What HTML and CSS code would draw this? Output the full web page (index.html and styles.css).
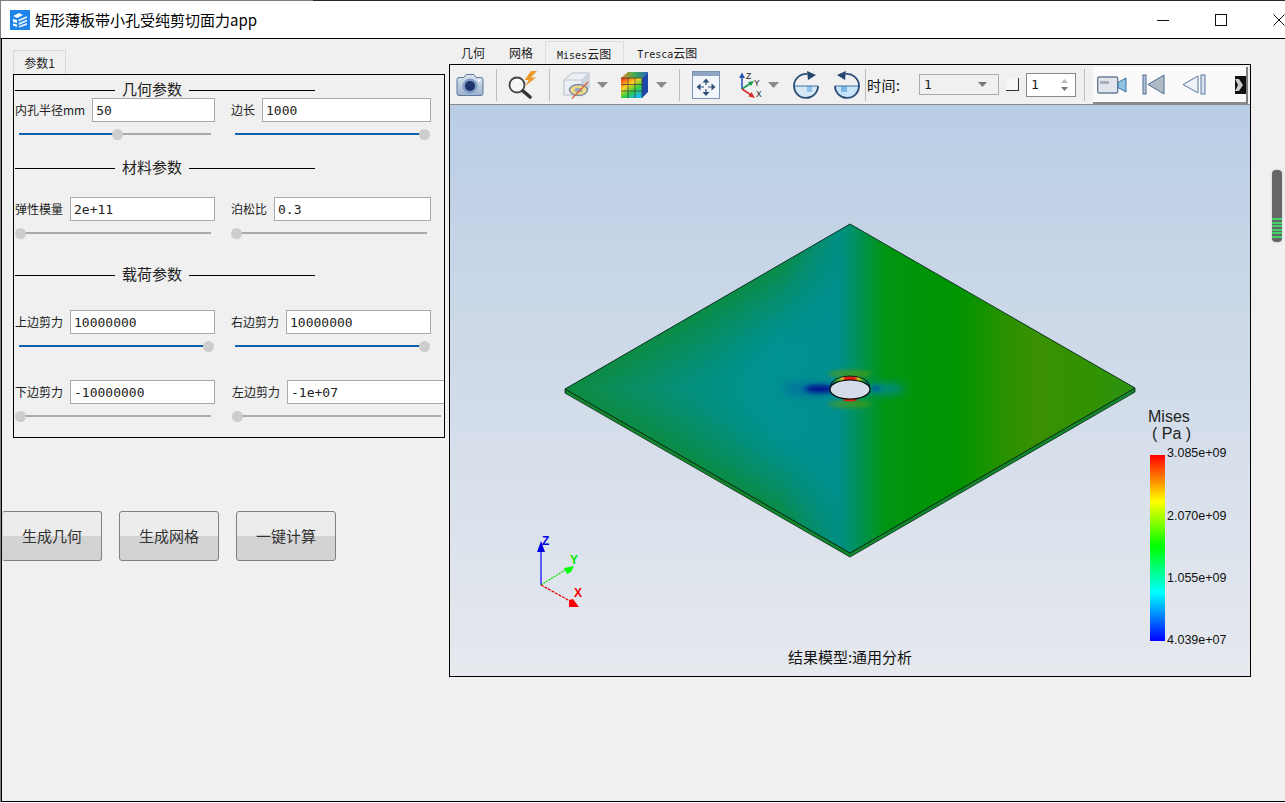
FILE: index.html
```html
<!DOCTYPE html>
<html lang="zh">
<head>
<meta charset="utf-8">
<title>矩形薄板带小孔受纯剪切面力app</title>
<link rel="stylesheet" href="styles.css">
</head>
<body>
<div class="window">
  <header class="titlebar">
    <svg class="app-icon" width="20" height="20" viewBox="0 0 20 20">
      <rect width="20" height="20" fill="#1c84ea"/>
      <path d="M3 6 L9 3 L13 5 L7 8 Z M3 9 L7 10 L7 13 L3 12 Z M3 13.5 L7 14.5 L7 17 L3 15.5 Z" fill="#fff"/>
      <path d="M8.5 9.5 L17 6 L17 8 L8.5 11.5 Z M8.5 13 L17 9.5 L17 11.5 L8.5 15 Z M8.5 16 L17 13 L17 15 L9.5 17.5 Z" fill="#dcecfb"/>
    </svg>
    <span class="app-title">矩形薄板带小孔受纯剪切面力app</span>
    <div class="win-controls">
      <span class="win-btn"><svg width="14" height="14" viewBox="0 0 14 14"><path d="M1 7.5H13" stroke="#111" fill="none"/></svg></span>
      <span class="win-btn"><svg width="14" height="14" viewBox="0 0 14 14"><rect x="1.5" y="1.5" width="11" height="11" stroke="#111" fill="none"/></svg></span>
      <span class="win-btn"><svg width="14" height="14" viewBox="0 0 14 14"><path d="M1.5 1.5L12.5 12.5M12.5 1.5L1.5 12.5" stroke="#111" fill="none"/></svg></span>
    </div>
  </header>

  <main class="main">
    <section class="left">
      <div class="param-tab">参数1</div>
      <div class="panel">
        <div class="sec sec-1"><i class="sec-line sec-line-a"></i><span>几何参数</span><i class="sec-line sec-line-b"></i></div>
        <div class="row row-1">
          <div class="col"><label>内孔半径mm</label><div class="input">50</div></div>
          <div class="col"><label>边长</label><div class="input">1000</div></div>
        </div>
        <div class="sliders">
          <div class="slider"><b class="fill" style="width:98px"></b><u class="knob" style="left:98px"></u></div>
          <div class="slider"><b class="fill" style="width:189px"></b><u class="knob" style="left:189px"></u></div>
        </div>

        <div class="sec sec-2"><i class="sec-line sec-line-a"></i><span>材料参数</span><i class="sec-line sec-line-b"></i></div>
        <div class="row row-2">
          <div class="col"><label>弹性模量</label><div class="input">2e+11</div></div>
          <div class="col"><label>泊松比</label><div class="input">0.3</div></div>
        </div>
        <div class="sliders">
          <div class="slider"><u class="knob" style="left:1px"></u></div>
          <div class="slider"><u class="knob" style="left:1px"></u></div>
        </div>

        <div class="sec sec-3"><i class="sec-line sec-line-a"></i><span>载荷参数</span><i class="sec-line sec-line-b"></i></div>
        <div class="row row-3">
          <div class="col"><label>上边剪力</label><div class="input">10000000</div></div>
          <div class="col"><label>右边剪力</label><div class="input">10000000</div></div>
        </div>
        <div class="sliders">
          <div class="slider"><b class="fill" style="width:189px"></b><u class="knob" style="left:189px"></u></div>
          <div class="slider"><b class="fill" style="width:189px"></b><u class="knob" style="left:189px"></u></div>
        </div>

        <div class="row row-4">
          <div class="col"><label>下边剪力</label><div class="input">-10000000</div></div>
          <div class="col col-wide"><label>左边剪力</label><div class="input input-cut">-1e+07</div></div>
        </div>
        <div class="sliders">
          <div class="slider"><u class="knob" style="left:1px"></u></div>
          <div class="slider slider-wide"><u class="knob" style="left:0"></u></div>
        </div>
      </div>

      <div class="actions">
        <button class="action">生成几何</button>
        <button class="action">生成网格</button>
        <button class="action">一键计算</button>
      </div>
    </section>

    <section class="right">
      <nav class="view-tabs">
        <span class="view-tab">几何</span>
        <span class="view-tab">网格</span>
        <span class="view-tab view-tab-on"><em>Mises</em>云图</span>
        <span class="view-tab"><em>Tresca</em>云图</span>
      </nav>
      <div class="frame">
        <div class="toolbar">
          <svg class="ti ml6" width="28" height="24" viewBox="0 0 28 24">
            <defs><linearGradient id="cb" x1="0" y1="0" x2="0" y2="1"><stop offset="0" stop-color="#dce6f0"/><stop offset="1" stop-color="#9db3cc"/></linearGradient></defs>
            <path d="M1 6.5 Q1 4.5 3 4.5 H8 L10 1.5 H18 L20 4.5 H25 Q27 4.5 27 6.5 V20.5 Q27 22.5 25 22.5 H3 Q1 22.5 1 20.5 Z" fill="url(#cb)" stroke="#5c7aa0"/>
            <circle cx="14" cy="13" r="7.5" fill="#7d9cc4"/><circle cx="14" cy="13" r="5" fill="#1c3268"/>
            <rect x="22" y="6.5" width="2.5" height="2" fill="#fff"/>
          </svg>
          <i class="sep ml12"></i>
          <svg class="ti ml11" width="30" height="28" viewBox="0 0 30 28">
            <circle cx="9" cy="14" r="7.500" fill="#f4f6f8" stroke="#444" stroke-width="1.800"/>
            <path d="M15 20 L22 26" stroke="#333" stroke-width="3.500" stroke-linecap="round"/>
            <path d="M23 0 L16.500 9 H20.500 L17.500 15 L28 6.500 H23 L29 0 Z" fill="#ee9a2a"/>
          </svg>
          <i class="sep ml11"></i>
          <svg class="ti ml12" width="28" height="28" viewBox="0 0 28 28">
            <path d="M2 9 L10 2 H27 V17 L20 24 H2 Z" fill="#eceff3" stroke="#b5bec9"/>
            <path d="M20 9 L27 2 V17 L20 24 Z" fill="#cdd5de"/>
            <path d="M2 9 H20 V24 M20 9 L27 2" fill="none" stroke="#c0c8d2"/>
            <ellipse cx="16.500" cy="19" rx="9" ry="5.500" fill="#ecd98a" stroke="#7d8ea8" stroke-width="1.400"/>
            <ellipse cx="16.500" cy="19" rx="4" ry="2.200" fill="#9aa8b8"/>
            <path d="M10 27.500 L26 11" stroke="#d9603a" stroke-width="1.300"/>
          </svg>
          <svg class="ti ml7" width="11" height="6" viewBox="0 0 11 6"><path d="M0 0H11L5.500 6Z" fill="#8a8a8a"/></svg>
          <svg class="ti ml12" width="30" height="28" viewBox="0 0 30 28">
            <defs>
              <linearGradient id="cf" x1="0" y1="0" x2=".7" y2="1"><stop offset="0" stop-color="#f02818"/><stop offset=".4" stop-color="#ffd020"/><stop offset=".7" stop-color="#30d040"/><stop offset="1" stop-color="#18b8e8"/></linearGradient>
              <linearGradient id="ct" x1="0" y1="0" x2="1" y2="0"><stop offset="0" stop-color="#f08020"/><stop offset=".5" stop-color="#40b050"/><stop offset="1" stop-color="#2060c0"/></linearGradient>
            </defs>
            <path d="M1 7 L8 1 H28 L22 7 Z" fill="url(#ct)"/>
            <path d="M22 7 L28 1 V21 L22 27 Z" fill="#1c48a8"/>
            <rect x="1" y="7" width="21" height="20" fill="url(#cf)"/>
            <path d="M8 7 V27 M15 7 V27 M1 13.500 H22 M1 20 H22 M1 7 H22 M22 7 V27" stroke="#3a3a3a" stroke-width=".7" fill="none"/>
          </svg>
          <svg class="ti ml6" width="11" height="6" viewBox="0 0 11 6"><path d="M0 0H11L5.500 6Z" fill="#8a8a8a"/></svg>
          <i class="sep ml12"></i>
          <svg class="ti ml12" width="28" height="28" viewBox="0 0 28 28">
            <rect x=".5" y=".5" width="27" height="27" fill="#f2f5f9" stroke="#7c93b4"/>
            <rect x="1" y="1" width="26" height="4" fill="#8ea4c2"/>
            <path d="M14 7.500 L10.500 11.500 H17.500 Z M14 25 L10.500 21 H17.500 Z M4.500 16 L8.500 12.500 V19.500 Z M23.500 16 L19.500 12.500 V19.500 Z" fill="#2f4f78"/>
            <path d="M14 11 V14 M14 18 V21.500 M8 16 H12 M16 16 H20" stroke="#2f4f78" stroke-width="1.200"/>
          </svg>
          <svg class="ti ml17" width="28" height="28" viewBox="0 0 28 28">
            <path d="M5 18 V5" stroke="#2a58b8" stroke-width="1.600"/><path d="M5 1.500 L2 7 H8 Z" fill="#2a58b8"/>
            <path d="M5 18 L14 12" stroke="#1a9a50" stroke-width="1.600"/><path d="M17 10 L11 11 L14 15 Z" fill="#1a9a50"/>
            <path d="M5 18 L14 24" stroke="#d83030" stroke-width="1.600"/><path d="M18 27 L11.500 25.500 L14.500 21 Z" fill="#d83030"/>
            <text class="ax-mini" x="9" y="8">Z</text><text class="ax-mini" x="17" y="15">Y</text><text class="ax-mini" x="19" y="26">X</text>
          </svg>
          <svg class="ti ml3" width="11" height="6" viewBox="0 0 11 6"><path d="M0 0H11L5.500 6Z" fill="#8a8a8a"/></svg>
          <svg class="ti ml14" width="26" height="28" viewBox="0 0 26 28">
            <path d="M1 15 H25 A12 12 0 0 1 1 15 Z" fill="#d4e8f6"/>
            <rect x="14" y="15" width="5" height="6" fill="#8fc4ea"/>
            <path d="M1 15 H25" stroke="#3c6ea8" fill="none"/>
            <path d="M25 15 A12 12 0 1 1 14 3" fill="none" stroke="#2c4e78" stroke-width="1.800"/>
            <path d="M14 0 L23 4 L15 9 Z" fill="#23456e"/>
          </svg>
          <svg class="ti ml15" width="26" height="28" viewBox="0 0 26 28">
            <path d="M1 15 H25 A12 12 0 0 1 1 15 Z" fill="#c8e4f8"/>
            <rect x="7" y="15" width="6" height="6" fill="#7db8e6"/>
            <path d="M1 15 H25" stroke="#3c6ea8" fill="none"/>
            <path d="M1 15 A12 12 0 1 0 12 3" fill="none" stroke="#2c4e78" stroke-width="1.800"/>
            <path d="M12 0 L3 4 L11 9 Z" fill="#23456e"/>
          </svg>
          <i class="sep ml5"></i>
          <span class="time-label">时间:</span>
          <div class="combo"><span>1</span><svg width="9" height="5" viewBox="0 0 9 5"><path d="M0 0H9L4.500 5Z" fill="#777"/></svg></div>
          <i class="corner"></i>
          <div class="spin"><span>1</span>
            <div class="spin-arrows"><svg width="7" height="4" viewBox="0 0 7 4"><path d="M3.500 0L7 4H0Z" fill="#bbb"/></svg><svg width="7" height="4" viewBox="0 0 7 4"><path d="M0 0H7L3.500 4Z" fill="#777"/></svg></div>
          </div>
          <i class="sep ml8"></i>
          <div class="tool-light">
            <svg class="ti" width="30" height="20" viewBox="0 0 30 20">
              <rect x=".7" y="2" width="20" height="16" rx="1.500" fill="#e2e6ec" stroke="#6a7d98" stroke-width="1.400"/>
              <rect x="3" y="6" width="9" height="3" fill="#a4b0c0"/>
              <path d="M21 7.500 L29 3 V17 L21 12.500 Z" fill="#8ec4e2" stroke="#3a6f9c"/>
            </svg>
            <svg class="ti ml15" width="23" height="21" viewBox="0 0 23 21">
              <rect x="1" y="1" width="3" height="19" fill="#b6c4d6" stroke="#4e6c96"/>
              <path d="M22 1 L6 10.500 L22 20 Z" fill="#b0b9c4" stroke="#4e6c96"/>
            </svg>
            <svg class="ti ml17" width="24" height="21" viewBox="0 0 24 21">
              <path d="M16 2 L1 10.500 L16 19 Z" fill="#eef1f5" stroke="#587aa4"/>
              <rect x="19" y="1" width="4" height="19" fill="#dbe3ec" stroke="#587aa4"/>
            </svg>
            <svg class="ti ml29" width="11" height="18" viewBox="0 0 11 18">
              <rect width="11" height="18" fill="#111"/>
              <path d="M0 3 H4 L8 9 L4 15 H0 L3 9 Z" fill="#ccc"/>
            </svg>
          </div>
        </div>
        <div class="viewport">
          <svg class="scene" width="800" height="571" viewBox="450 105 800 571">
            <defs>
              <linearGradient id="base" gradientUnits="userSpaceOnUse" x1="565" y1="0" x2="1135" y2="0">
                <stop offset="0" stop-color="#14906a"/>
                <stop offset=".24" stop-color="#03917f"/>
                <stop offset=".36" stop-color="#009292"/>
                <stop offset=".48" stop-color="#008f8e"/>
                <stop offset=".56" stop-color="#009512"/>
                <stop offset=".69" stop-color="#009400"/>
                <stop offset=".77" stop-color="#289200"/>
                <stop offset=".83" stop-color="#3a9000"/>
                <stop offset=".92" stop-color="#329200"/>
                <stop offset="1" stop-color="#2a9414"/>
              </linearGradient>
              <linearGradient id="edgeTop" gradientUnits="userSpaceOnUse" x1="707" y1="306" x2="745" y2="372">
                <stop offset="0" stop-color="#0c8a38" stop-opacity=".85"/>
                <stop offset=".5" stop-color="#0a8c52" stop-opacity=".4"/>
                <stop offset="1" stop-color="#009090" stop-opacity="0"/>
              </linearGradient>
              <linearGradient id="edgeBot" gradientUnits="userSpaceOnUse" x1="707" y1="471" x2="745" y2="405">
                <stop offset="0" stop-color="#0c8a38" stop-opacity=".85"/>
                <stop offset=".5" stop-color="#0a8c52" stop-opacity=".4"/>
                <stop offset="1" stop-color="#009090" stop-opacity="0"/>
              </linearGradient>
              <linearGradient id="fadeX" gradientUnits="userSpaceOnUse" x1="780" y1="0" x2="850" y2="0">
                <stop offset="0" stop-color="#fff"/>
                <stop offset="1" stop-color="#000"/>
              </linearGradient>
              <mask id="leftFade" maskUnits="userSpaceOnUse" x="560" y="220" width="300" height="340">
                <rect x="560" y="220" width="300" height="340" fill="url(#fadeX)"/>
              </mask>
              <linearGradient id="wall" x1="0" y1="0" x2="1" y2="0">
                <stop offset="0" stop-color="#004c9a"/>
                <stop offset=".15" stop-color="#109a30"/>
                <stop offset=".3" stop-color="#c8c820"/>
                <stop offset=".38" stop-color="#e02010"/>
                <stop offset=".62" stop-color="#e02010"/>
                <stop offset=".72" stop-color="#c8c820"/>
                <stop offset=".85" stop-color="#109a30"/>
                <stop offset="1" stop-color="#004c9a"/>
              </linearGradient>
              <linearGradient id="legend" x1="0" y1="0" x2="0" y2="1">
                <stop offset="0" stop-color="#ff0000"/>
                <stop offset=".25" stop-color="#ffff00"/>
                <stop offset=".49" stop-color="#00ff00"/>
                <stop offset=".74" stop-color="#00ffff"/>
                <stop offset="1" stop-color="#0000ff"/>
              </linearGradient>
              <filter id="b2" x="-50%" y="-100%" width="200%" height="300%"><feGaussianBlur stdDeviation="2"/></filter>
              <filter id="b5" x="-50%" y="-100%" width="200%" height="300%"><feGaussianBlur stdDeviation="5"/></filter>
              <clipPath id="plate"><path d="M565 389 L850 224 L1135 388 L850 553 Z"/></clipPath>
            </defs>

            <path d="M565 389 L850 553 L1135 388 V392 L850 557 L565 393 Z" fill="#12882a" stroke="#06281a" stroke-width=".8"/>
            <path d="M565 389 L850 224 L1135 388 L850 553 Z" fill="url(#base)"/>
            <g clip-path="url(#plate)">
              <g mask="url(#leftFade)">
                <path d="M565 389 L850 224 V389 Z" fill="url(#edgeTop)"/>
                <path d="M565 389 L850 553 V389 Z" fill="url(#edgeBot)"/>
              </g>
              <ellipse cx="850" cy="374" rx="22" ry="4" fill="#60a000" opacity=".6" filter="url(#b2)"/>
              <ellipse cx="850" cy="404" rx="22" ry="4" fill="#60a000" opacity=".55" filter="url(#b2)"/>
              <ellipse cx="812" cy="389" rx="30" ry="6" fill="#005ca8" opacity=".65" filter="url(#b5)"/>
              <ellipse cx="820" cy="389" rx="15" ry="3.500" fill="#00108e" filter="url(#b2)"/>
              <ellipse cx="885" cy="389" rx="20" ry="5" fill="#0088a8" opacity=".9" filter="url(#b5)"/>
              <ellipse cx="876" cy="388.500" rx="5" ry="2" fill="#0050b0" filter="url(#b2)"/>
            </g>
            <path d="M565 389 L850 224 L1135 388 L850 553 Z" fill="none" stroke="#06281a" stroke-width=".9"/>
            <ellipse cx="850" cy="400" rx="7" ry="1.500" fill="#e02010"/>
            <ellipse cx="850" cy="386" rx="19.500" ry="10" fill="url(#wall)" stroke="#051a20" stroke-width=".9"/>
            <ellipse cx="850" cy="389.500" rx="20" ry="9.500" fill="#d3dce8" stroke="#000" stroke-width="1.100"/>

            <path d="M541 585 V550" stroke="#0000ff" stroke-width="1.200"/>
            <path d="M541 541 L545 552 H537 Z" fill="#0000e0"/>
            <path d="M541 585 L565 570" stroke="#00e000" stroke-width="1.200" stroke-dasharray="2 1"/>
            <path d="M574 566 L564 568 L567 574 L571 572 Z" fill="#00ff00"/>
            <path d="M541 585 L570 601" stroke="#e00000" stroke-width="1.200" stroke-dasharray="3 1"/>
            <path d="M579 607 L569 607 L569 600 L573 599 Z" fill="#ff0000"/>
            <text class="ax ax-z" x="542" y="545">Z</text>
            <text class="ax ax-y" x="570" y="564">Y</text>
            <text class="ax ax-x" x="574" y="597">X</text>

            <text class="lg-title" x="1148" y="422">Mises</text>
            <text class="lg-title" x="1152" y="439">( Pa )</text>
            <rect x="1150" y="455" width="15" height="186" fill="url(#legend)"/>
            <text class="lg-num" x="1167" y="457">3.085e+09</text>
            <text class="lg-num" x="1167" y="520">2.070e+09</text>
            <text class="lg-num" x="1167" y="582">1.055e+09</text>
            <text class="lg-num" x="1167" y="644">4.039e+07</text>
            <text class="caption" x="850" y="663">结果模型:通用分析</text>
          </svg>
        </div>
      </div>
    </section>
  </main>
  <div class="pill"></div>
</div>
</body>
</html>
```
FILE: styles.css
```css
* { box-sizing: border-box; }
html, body { margin: 0; height: 100%; background: #fff; overflow: hidden; }
body { font-family: "Noto Sans CJK SC", "Liberation Sans", sans-serif; color: #111; }
.window { position: relative; width: 1285px; height: 803px; overflow: hidden; padding-top: 1px; background: linear-gradient(90deg, #808080 313px, #2a2a2a 313px) 0 0 / 100% 1px no-repeat, #fff; }

.titlebar { height: 38px; background: #fff; border-bottom: 1px solid #000; border-left: 1px solid #808080; display: flex; align-items: center; overflow: hidden; }
.app-icon { margin-left: 9px; flex: none; }
.app-title { margin-left: 5px; font-size: 15px; line-height: 20px; color: #000; }
.win-controls { margin-left: auto; margin-right: -23px; display: flex; flex: none; }
.win-btn { width: 58px; height: 36px; display: flex; align-items: center; justify-content: center; }

.main { height: 763px; display: flex; background: #f0f0f0; border-left: 1px solid #000; border-bottom: 1px solid #000; box-shadow: -1px 0 0 #808080; margin-left: 1px; }
.left { width: 447px; flex: none; padding-top: 11px; }
.right { width: 802px; flex: none; padding-top: 2px; }

.param-tab { margin-left: 11px; width: 53px; height: 24px; border: 1px solid #d9d9d9; border-bottom: 0; font-size: 12px; line-height: 24px; text-align: center; color: #222; }
.panel { margin-left: 11px; width: 432px; height: 364px; border: 1px solid #000; padding: 7px 0 0 1px; overflow: hidden; }

.sec { display: flex; align-items: center; height: 16px; font-size: 15px; color: #222; }
.sec span { width: 74px; text-align: center; flex: none; line-height: 14px; padding-bottom: 2px; }
.sec-line { display: block; height: 1px; background: #000; }
.sec-line-a { width: 100px; }
.sec-line-b { width: 126px; }
.sec-2 { margin-top: 20px; }
.sec-3 { margin-top: 28px; }

.row { display: flex; gap: 16px; height: 24px; }
.row-2 { margin-top: 21px; }
.row-3 { margin-top: 27px; }
.row-4 { margin-top: 28px; }
.col { width: 200px; flex: none; display: flex; align-items: center; gap: 7px; }
.col-wide { width: 212px; margin-left: 1px; }
.col label { flex: none; font-size: 12px; line-height: 24px; color: #222; }
.input { flex: 1; height: 24px; border: 1px solid #a9a9a9; background: #fff; padding: 1px 2px 0 3px; font-family: "DejaVu Sans Mono", monospace; font-size: 13px; line-height: 22px; color: #222; white-space: nowrap; }
.input-cut { border-right: 0; }

.sliders { display: flex; gap: 24px; margin-top: 6px; padding-left: 4px; height: 12px; }
.slider { position: relative; width: 192px; height: 2px; margin-top: 5px; background: #aaa; flex: none; }
.slider-wide { width: 204px; margin-left: 2px; }
.fill { position: absolute; left: 0; top: 0; height: 2px; background: #0f62b0; }
.knob { position: absolute; top: -4px; width: 11px; height: 11px; margin-left: -5px; border-radius: 50%; background: #cdcdcd; }

.actions { display: flex; gap: 17px; margin-top: 73px; }
.action { width: 100px; height: 50px; padding: 0 0 2px; border: 1px solid #808080; border-radius: 3px; background: linear-gradient(#ececec 0, #ececec 50%, #d3d3d3 50%, #d3d3d3 100%); font-family: inherit; font-size: 15px; color: #333; }
.action:first-child { border-left-color: #d0d0d0; }

.view-tabs { display: flex; height: 23px; font-size: 12px; line-height: 24px; color: #222; }
.view-tab { padding: 0 12px; white-space: nowrap; }
.view-tab em { font-style: normal; font-family: "DejaVu Sans Mono", monospace; font-size: 10px; }
.view-tab-on { padding: 0 12px 0 11px; border: 1px solid #dcdcdc; border-bottom: 0; margin-right: 1px; }

.frame { width: 802px; height: 613px; border: 1px solid #000; display: flex; flex-direction: column; }
.toolbar { height: 40px; flex: none; display: flex; align-items: center; background: #f0f0f0; border-bottom: 1px solid #8a8a8a; }
.ti { flex: none; display: block; }
.ml3 { margin-left: 3px; } .ml5 { margin-left: 5px; } .ml6 { margin-left: 6px; } .ml7 { margin-left: 7px; } .ml8 { margin-left: 8px; }
.ml11 { margin-left: 11px; } .ml12 { margin-left: 12px; } .ml14 { margin-left: 14px; } .ml15 { margin-left: 15px; } .ml17 { margin-left: 17px; } .ml29 { margin-left: 29px; }
.sep { flex: none; width: 1px; height: 32px; background: #bdbdbd; }
.ax-mini { font-family: "Liberation Sans", sans-serif; font-size: 8.500px; fill: #222; }
.time-label { margin-left: 1px; width: 36px; flex: none; font-size: 14px; line-height: 20px; color: #111; white-space: nowrap; letter-spacing: .5px; }
.combo { margin-left: 16px; width: 80px; height: 21px; flex: none; border: 1px solid #aaa; display: flex; align-items: center; justify-content: space-between; padding: 0 11px 0 4px; font-family: "DejaVu Sans Mono", monospace; font-size: 13px; color: #222; }
.corner { margin-left: 7px; width: 13px; height: 13px; flex: none; border-right: 1px solid #333; border-bottom: 1px solid #333; background: #f6f6f6; }
.spin { margin-left: 7px; width: 50px; height: 24px; flex: none; background: #fff; border: 1px solid #888; display: flex; align-items: center; justify-content: space-between; padding: 0 7px 0 4px; font-family: "DejaVu Sans Mono", monospace; font-size: 13px; color: #222; }
.spin-arrows { display: flex; flex-direction: column; gap: 4px; }
.spin-arrows svg { display: block; }
.tool-light { margin-left: 8px; width: 155px; height: 37px; align-self: flex-end; flex: none; display: flex; align-items: center; background: #fafafa; padding-left: 4px; border-right: 2px solid #808080; border-bottom: 2px solid #8a8a8a; overflow: hidden; }

.viewport { flex: 1; background: linear-gradient(#b9cde5 0%, #cdd9e8 40%, #e6e9ee 100%); overflow: hidden; }
.scene { display: block; }
.ax { font-family: "Liberation Sans", sans-serif; font-size: 12px; font-weight: 700; }
.ax-z { fill: #0000e0; } .ax-y { fill: #00e800; } .ax-x { fill: #f00000; }
.lg-title { font-family: "Liberation Sans", sans-serif; font-size: 16px; fill: #222; }
.lg-num { font-family: "Liberation Sans", sans-serif; font-size: 12.500px; fill: #111; }
.caption { font-family: "Noto Sans CJK SC", sans-serif; font-size: 15px; fill: #111; text-anchor: middle; }

.pill { position: absolute; left: 1272px; top: 170px; width: 10px; height: 72px; border-radius: 4px; background: repeating-linear-gradient(#3fd36a 0, #3fd36a 2px, #666 2px, #666 3.500px) 0 48px / 100% 21px no-repeat, #666; box-shadow: 0 0 3px rgba(0,0,0,.15); }
```
